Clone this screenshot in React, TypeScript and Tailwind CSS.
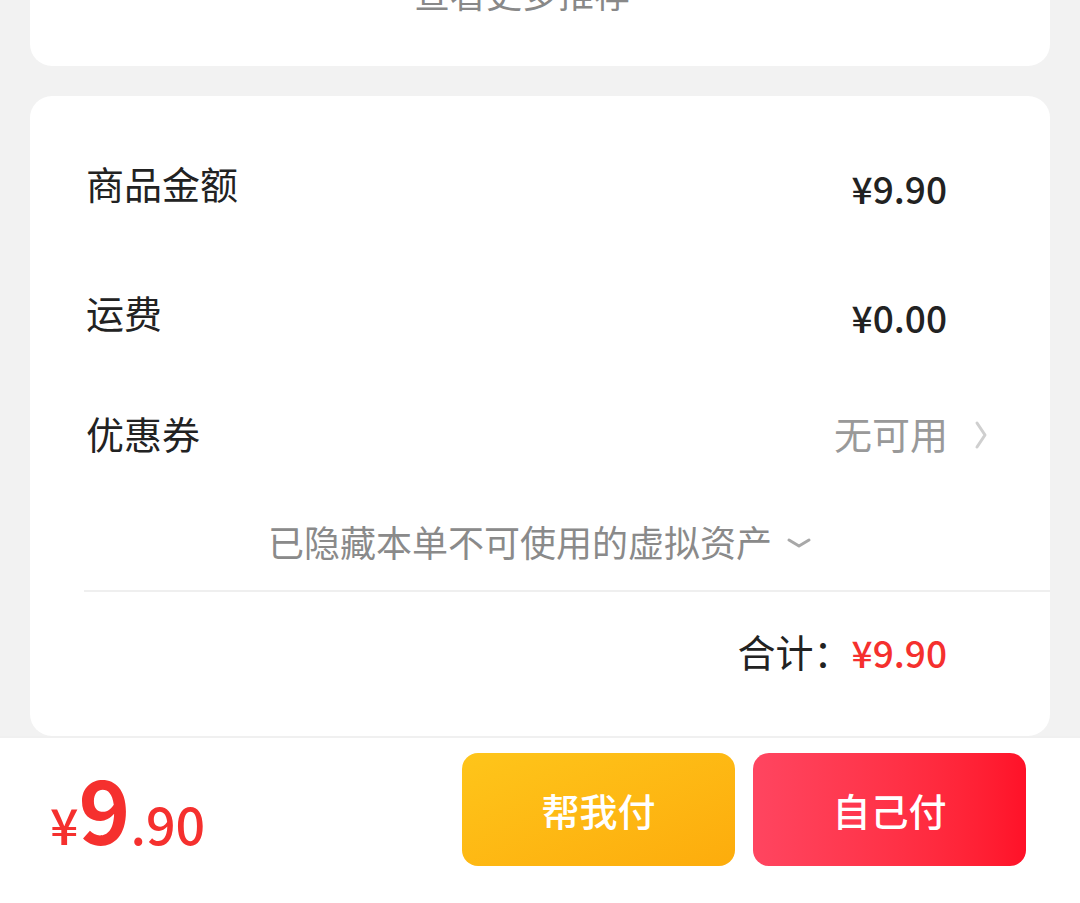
const font = {
  fontFamily: '"Noto Sans CJK SC", "Noto Sans", sans-serif',
};

function Chevron() {
  return (
    <svg width="14" height="30" viewBox="0 0 14 30" className="ml-[26px]">
      <path d="M3 3 L11 15 L3 27" fill="none" stroke="#cfcfcf" strokeWidth="3" strokeLinecap="round" strokeLinejoin="round" />
    </svg>
  );
}

function ChevronDown() {
  return (
    <svg width="26" height="14" viewBox="0 0 26 14" className="ml-[14px]">
      <path d="M3 4 L13 10 L23 4" fill="none" stroke="#a8a8a8" strokeWidth="3" strokeLinecap="round" strokeLinejoin="round" />
    </svg>
  );
}

function Row({ label, value, className }: { label: string; value: React.ReactNode; className: string }) {
  return (
    <div className={`flex h-[60px] items-center justify-between pr-[103px] ${className}`}>
      <span className="-mt-[6px] text-[38px] leading-none text-[#222]">{label}</span>
      {value}
    </div>
  );
}

export default function App() {
  return (
    <div className="flex h-[903px] w-[1080px] flex-col overflow-hidden bg-[#f2f2f2]" style={font}>
      <div className="px-[30px]">
        {/* 上方卡片（被截断） */}
        <div className="flex h-[66px] justify-center overflow-hidden rounded-b-[22px] bg-white pr-[36px]">
          <span className="-mt-[32px] text-[36px] leading-[48px] text-[#888]">查看更多推荐</span>
        </div>

        {/* 金额卡片 */}
        <div className="mt-[30px] h-[640px] rounded-[22px] bg-white pl-[56px] pt-[60px]">
          <Row
            label="商品金额"
            className=""
            value={<span className="mt-[4px] text-[37px] font-medium leading-none text-[#222]">¥9.90</span>}
          />
          <Row
            label="运费"
            className="mt-[69px]"
            value={<span className="mt-[4px] text-[37px] font-medium leading-none text-[#222]">¥0.00</span>}
          />
          <div className="mt-[60px] flex h-[60px] items-center justify-between pr-[62px]">
            <span className="-mt-[4px] text-[38px] leading-none text-[#222]">优惠券</span>
            <div className="flex items-center">
              <span className="-mt-[4px] text-[38px] leading-none text-[#999]">无可用</span>
              <Chevron />
            </div>
          </div>
          <div className="mt-[53px] flex h-[50px] items-center justify-center pr-[56px]">
            <span className="-mt-[4px] text-[36px] leading-none text-[#8a8a8a]">已隐藏本单不可使用的虚拟资产</span>
            <ChevronDown />
          </div>
          <div className="ml-[-2px] mt-[22px] border-t-2 border-[#efefef]" />
          <div className="flex h-[124px] items-center justify-end pr-[103px]">
            <span className="-mt-[6px] text-[38px] leading-none text-[#222]">合计：</span>
            <span className="-mt-[4px] text-[37px] font-medium leading-none text-[#f5302e]">¥9.90</span>
          </div>
        </div>
      </div>

      {/* 底部支付栏 */}
      <div className="flex flex-1 items-start justify-between border-t-2 border-[#f0f0f0] bg-white pl-[50px] pr-[54px] pt-[15px]">
        <div className="mt-[10px] flex items-baseline text-[#f5302e]">
          <span className="text-[50px] font-medium leading-none">¥</span>
          <span className="text-[88px] font-bold leading-none">9</span>
          <span className="text-[52px] font-medium leading-none">.90</span>
        </div>
        <div className="flex gap-[18px]">
          <button className="flex h-[113px] w-[273px] items-center justify-center rounded-[16px] bg-gradient-to-br from-[#fec51a] to-[#fdac0c] text-[38px] font-medium text-white">
            帮我付
          </button>
          <button className="flex h-[113px] w-[273px] items-center justify-center rounded-[16px] bg-gradient-to-r from-[#ff4560] to-[#ff1128] text-[38px] font-medium text-white">
            自己付
          </button>
        </div>
      </div>
    </div>
  );
}
